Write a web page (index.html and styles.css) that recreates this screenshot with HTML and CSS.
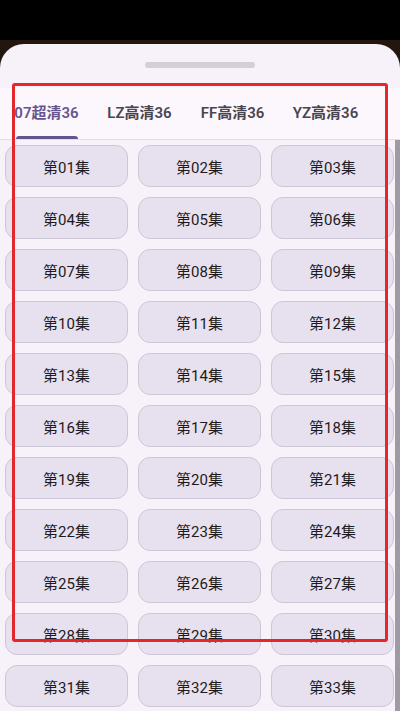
FILE: index.html
```html
<!DOCTYPE html>
<html lang="zh">
<head>
    <meta charset="UTF-8">
    <meta name="viewport" content="width=device-width, initial-scale=1.0">
    <title>选集</title>
    <link rel="stylesheet" href="styles.css">
</head>
<body>
    <div class="page">
        <div class="sheet">
            <div class="handle"></div>
            <ul class="tabs">
                <li class="tab active">07超清36</li>
                <li class="tab">LZ高清36</li>
                <li class="tab">FF高清36</li>
                <li class="tab">YZ高清36</li>
            </ul>
            <div class="body">
                <ul class="episodes" id="episodes"></ul>
                <div class="scrollbar"></div>
            </div>
        </div>
        <div class="mark"></div>
    </div>

    <script>
        let list = document.querySelector("#episodes")
        // only the rows that fit on screen
        for (let i = 1; i <= 33; i++) {
            let li = document.createElement("li")
            li.className = "episode"
            li.textContent = "第" + (i < 10 ? "0" + i : i) + "集"
            list.appendChild(li)
        }
    </script>
</body>
</html>
```

FILE: styles.css
```css
body {
    margin: 0;
    font-family: Roboto, "Noto Sans CJK SC", sans-serif;
}
ul {
    margin: 0;
    padding: 0;
    list-style: none;
}
.page {
    position: relative;
    width: 400px;
    height: 711px;
    overflow: hidden;
    padding-top: 44px;
    box-sizing: border-box;
    background: linear-gradient(#000 0 40px, #22160f 40px);
}
.sheet {
    height: 100%;
    background: #f7f2f9;
    border-radius: 24px 24px 0 0;
    display: flex;
    flex-direction: column;
}
.handle {
    width: 110px;
    height: 6px;
    margin: 18px auto 0;
    border-radius: 3px;
    background: #d3cfd7;
}
.tabs {
    display: flex;
    margin-top: 20px;
    height: 51px;
    border-bottom: 1px solid #e2dde6;
    background: #fcf7fc;
}
.tab {
    position: relative;
    width: 93px;
    flex: none;
    text-align: center;
    line-height: 50px;
    font-size: 15px;
    font-weight: 600;
    color: #49454f;
}
.tab.active {
    color: #65558f;
}
.tab.active::after {
    content: "";
    position: absolute;
    left: 16px;
    right: 15px;
    bottom: 0;
    height: 3px;
    border-radius: 3px 3px 0 0;
    background: #65558f;
}
.body {
    flex: 1;
    display: flex;
    min-height: 0;
}
.episodes {
    flex: 1;
    display: grid;
    grid-template-columns: repeat(3, 123px);
    grid-auto-rows: 42px;
    gap: 10px;
    padding: 5px 0 0 5px;
    overflow: hidden;
}
.episode {
    box-sizing: border-box;
    border: 1px solid #cdc6d6;
    border-radius: 12px;
    background: #e7e0ef;
    color: #1d1b20;
    font-size: 15px;
    display: flex;
    align-items: center;
    justify-content: center;
}
.scrollbar {
    width: 5px;
    background: #9f9ba4;
}
.mark {
    position: absolute;
    left: 12px;
    top: 83px;
    width: 376px;
    height: 559px;
    box-sizing: border-box;
    border: 3px solid #e5262b;
    border-radius: 3px;
}
```
